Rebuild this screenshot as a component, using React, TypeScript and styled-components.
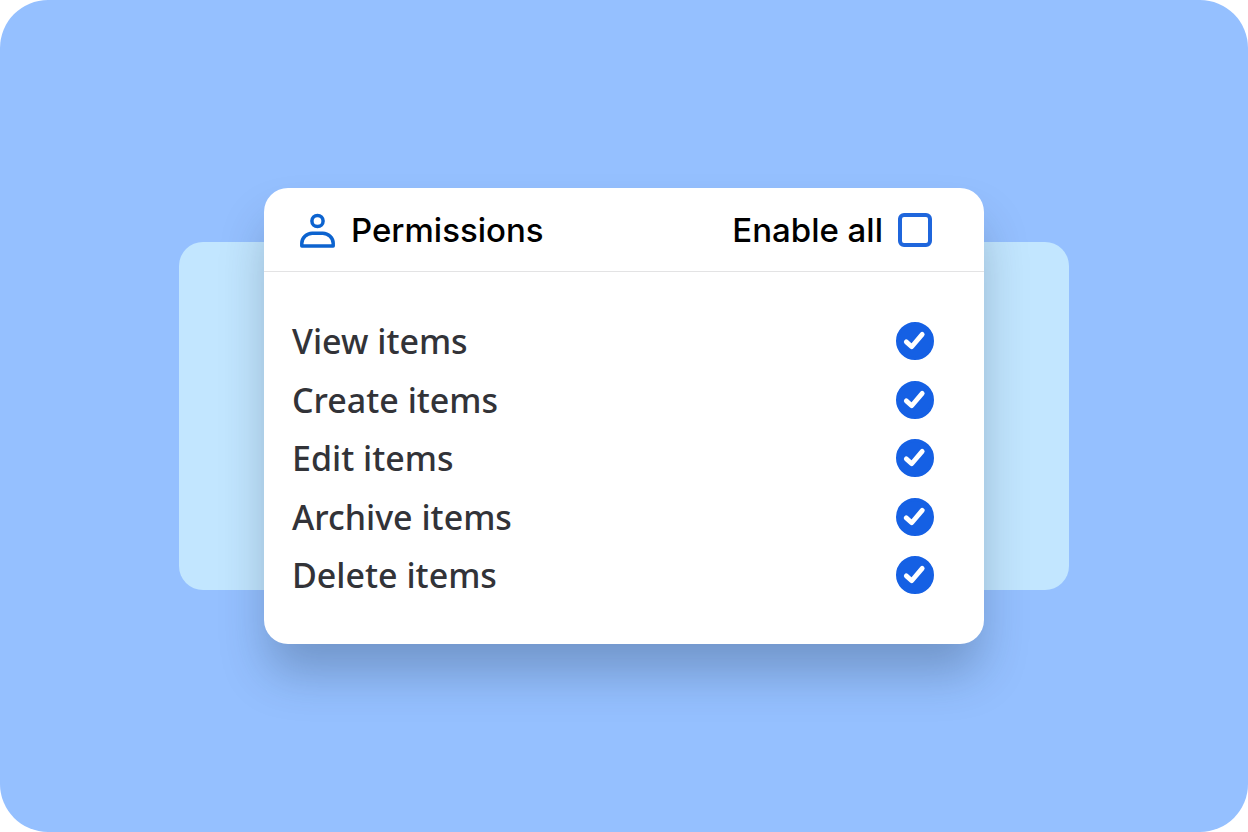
import React, { useState } from "react";
import styled, { createGlobalStyle } from "styled-components";

const GlobalStyle = createGlobalStyle`
  *, *::before, *::after { box-sizing: border-box; }
  body { margin: 0; background: #ffffff; }
`;

const Stage = styled.main`
  display: grid;
  place-items: center;
  min-height: 100vh;
  border-radius: 48px;
  background: #95c0ff;
`;

const Backdrop = styled.div`
  grid-area: 1 / 1;
  width: 72%;
  max-width: 890px;
  min-height: 348px;
  border-radius: 24px;
  background: #c2e6ff;
`;

const Card = styled.section`
  grid-area: 1 / 1;
  z-index: 1;
  display: flex;
  flex-direction: column;
  width: 90%;
  max-width: 720px;
  min-height: 456px;
  border-radius: 24px;
  background: #ffffff;
  box-shadow: 0 32px 48px -4px rgba(20, 40, 60, 0.28);
`;

const Header = styled.header`
  display: flex;
  align-items: center;
  justify-content: space-between;
  height: 84px;
  padding: 1px 52px 0 36px;
  border-bottom: 1px solid #e3e3e4;
  font-family: Inter, "Liberation Sans", sans-serif;
  font-size: 33px;
  font-weight: 500;
  line-height: 40px;
  color: #000000;
`;

const Heading = styled.div`
  display: flex;
  align-items: center;
  gap: 15px;
`;

const Title = styled.h1`
  margin: 0;
  font: inherit;
`;

const EnableAll = styled.label`
  display: flex;
  align-items: center;
  gap: 15px;
  cursor: pointer;
`;

const SquareBox = styled.input`
  appearance: none;
  width: 34px;
  height: 34px;
  margin: 0;
  border: 4px solid #1f66dc;
  border-radius: 6px;
  background: #ffffff;
  cursor: pointer;

  &:checked { background: #1f66dc; }
`;

const List = styled.ul`
  display: flex;
  flex: 1;
  flex-direction: column;
  justify-content: space-between;
  margin: 0;
  padding: 50px 50px 50px 28px;
  list-style: none;
`;

const Row = styled.label`
  display: flex;
  align-items: center;
  justify-content: space-between;
  height: 38px;
  font-family: "Noto Sans", "Open Sans", sans-serif;
  font-size: 34px;
  font-weight: 500;
  line-height: 38px;
  color: #323338;
  cursor: pointer;
`;

const Toggle = styled.span`
  display: grid;
`;

const RoundBox = styled.input`
  grid-area: 1 / 1;
  appearance: none;
  width: 38px;
  height: 38px;
  margin: 0;
  border: 3px solid #1560e4;
  border-radius: 50%;
  background: #ffffff;
  cursor: pointer;

  &:checked { background: #1560e4; }
`;

const CheckMark = styled.svg`
  grid-area: 1 / 1;
  pointer-events: none;
`;

const items = ["View items", "Create items", "Edit items", "Archive items", "Delete items"];

function PersonIcon() {
  return (
    <svg width="36" height="36" viewBox="0 0 36 36" fill="none" stroke="#0c63cf" strokeWidth="3.5" strokeLinejoin="round" aria-hidden="true">
      <circle cx="17.5" cy="9" r="5.6" />
      <path d="M1.8 33.9V31.3C1.8 25.9 6.6 21.2 12.2 21.2H22.8C28.4 21.2 33.2 25.9 33.2 31.3V33.9Z" />
    </svg>
  );
}

function PermissionRow({ name }: { name: string }) {
  const [checked, setChecked] = useState(true);
  return (
    <li>
      <Row>
        {name}
        <Toggle>
          <RoundBox type="checkbox" checked={checked} onChange={() => setChecked(!checked)} />
          <CheckMark width="38" height="38" viewBox="0 0 38 38" fill="none" stroke="#ffffff" strokeWidth="4.8" strokeLinecap="round" strokeLinejoin="round" aria-hidden="true">
            <path d="M10.3 19.9L15.7 24.7L26.2 12.4" />
          </CheckMark>
        </Toggle>
      </Row>
    </li>
  );
}

export default function App() {
  return (
    <>
      <GlobalStyle />
      <Stage>
        <Backdrop />
        <Card>
          <Header>
            <Heading>
              <PersonIcon />
              <Title>Permissions</Title>
            </Heading>
            <EnableAll>
              Enable all
              <SquareBox type="checkbox" />
            </EnableAll>
          </Header>
          <List>
            {items.map((name) => (
              <PermissionRow key={name} name={name} />
            ))}
          </List>
        </Card>
      </Stage>
    </>
  );
}
